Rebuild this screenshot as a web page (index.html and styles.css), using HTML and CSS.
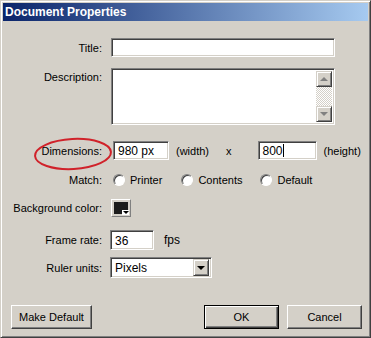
FILE: index.html
```html
<!DOCTYPE html>
<html lang="en">

<head>
  <meta charset="utf-8" />
  <title>Document Properties</title>
  <link rel="stylesheet" href="styles.css">
</head>

<body>
  <div class="window">
    <div class="titlebar">Document Properties</div>
    <div class="content">
      <div class="row row-title">
        <label class="label">Title:</label>
        <div class="field field-wide"></div>
      </div>

      <div class="row row-desc">
        <label class="label label-top">Description:</label>
        <div class="field field-wide field-area">
          <div class="scrollbar">
            <div class="scroll-btn"><span class="arrow arrow-up"></span></div>
            <div class="scroll-track"></div>
            <div class="scroll-btn"><span class="arrow arrow-down"></span></div>
          </div>
        </div>
      </div>

      <div class="row row-dims">
        <label class="label">Dimensions:</label>
        <div class="field field-dim">980 px</div>
        <span class="unit unit-width">(width)</span>
        <span class="times">x</span>
        <div class="field field-dim field-height">800<span class="caret"></span></div>
        <span class="unit">(height)</span>
        <svg class="circled" width="82" height="36" viewBox="0 0 82 36">
          <ellipse cx="41" cy="18" rx="38" ry="15" fill="none" stroke="#d0222a" stroke-width="2"
            transform="rotate(-3 41 18)" />
        </svg>
      </div>

      <div class="row row-match">
        <label class="label">Match:</label>
        <div class="radios">
          <span class="radio-item"><span class="radio"></span>Printer</span>
          <span class="radio-item"><span class="radio"></span>Contents</span>
          <span class="radio-item"><span class="radio"></span>Default</span>
        </div>
      </div>

      <div class="row row-color">
        <label class="label">Background color:</label>
        <div class="swatch">
          <div class="swatch-fill"></div>
          <span class="swatch-arrow"></span>
        </div>
      </div>

      <div class="row row-rate">
        <label class="label">Frame rate:</label>
        <div class="field field-rate">36</div>
        <span class="unit unit-fps">fps</span>
      </div>

      <div class="row row-ruler">
        <label class="label">Ruler units:</label>
        <div class="field select">
          <span class="select-value">Pixels</span>
          <span class="select-btn"><span class="arrow arrow-black"></span></span>
        </div>
      </div>

      <div class="buttons">
        <button class="btn btn-wide">Make Default</button>
        <div class="buttons-right">
          <button class="btn btn-default">OK</button>
          <button class="btn">Cancel</button>
        </div>
      </div>
    </div>
  </div>
</body>

</html>
```

FILE: styles.css
```css
:root {
  --face: #d4d0c8;
  --shadow: #808080;
  --dark: #404040;
  --light: #ffffff;
}

html,
body {
  margin: 0;
  height: 100%;
}

body {
  background: var(--face);
  font-family: "Liberation Sans", Arial, sans-serif;
  font-size: 11px;
  color: #000;
}

.window {
  box-sizing: border-box;
  width: 371px;
  height: 338px;
  padding: 2px;
  border: 1px solid;
  border-color: var(--face) var(--dark) var(--dark) var(--face);
  box-shadow: inset 1px 1px var(--light), inset -1px -1px var(--shadow);
  display: flex;
  flex-direction: column;
}

.titlebar {
  height: 18px;
  line-height: 18px;
  padding-left: 2px;
  font-weight: bold;
  font-size: 12px;
  color: #fff;
  background: linear-gradient(to right, #0a246a, #a6caf0);
}

.content {
  position: relative;
  display: flex;
  flex-direction: column;
  padding-top: 17px;
}

.row {
  display: flex;
  align-items: center;
}

.label {
  box-sizing: border-box;
  width: 99px;
  flex: none;
  text-align: right;
  margin-right: 8px;
}

.label-top {
  align-self: flex-start;
  padding-top: 3px;
}

.field {
  box-sizing: border-box;
  height: 19px;
  background: #fff;
  border: 1px solid;
  border-color: var(--shadow) var(--light) var(--light) var(--shadow);
  box-shadow: inset 1px 1px var(--dark), inset -1px -1px var(--face);
  padding: 2px 4px 0;
  line-height: 14px;
  font-size: 12px;
}

.field-wide {
  width: 224px;
  margin-left: 1px;
}

.row-desc {
  margin-top: 11px;
}

.field-area {
  height: 57px;
  display: flex;
  justify-content: flex-end;
  padding: 2px;
}

.scrollbar {
  width: 16px;
  display: flex;
  flex-direction: column;
}

.scroll-track {
  flex: 1;
  background-color: #fff;
  background-image: repeating-conic-gradient(var(--face) 0 25%, #fff 0 50%);
  background-size: 2px 2px;
}

.scroll-btn {
  box-sizing: border-box;
  height: 16px;
  background: var(--face);
  border: 1px solid;
  border-color: var(--face) var(--dark) var(--dark) var(--face);
  box-shadow: inset 1px 1px var(--light), inset -1px -1px var(--shadow);
  display: flex;
  align-items: center;
  justify-content: center;
}

.arrow {
  width: 0;
  height: 0;
  border-left: 4px solid transparent;
  border-right: 4px solid transparent;
}

.arrow-up {
  border-bottom: 4px solid var(--shadow);
}

.arrow-down {
  border-top: 4px solid var(--shadow);
}

.arrow-black {
  border-top: 4px solid #000;
}

.row-dims {
  margin-top: 16px;
}

.field-dim {
  width: 56px;
  margin-left: 3px;
}

.field-height {
  width: 59px;
  margin-left: 0;
}

.caret {
  display: inline-block;
  width: 1px;
  height: 13px;
  background: #000;
  vertical-align: -2px;
}

.unit {
  margin-left: 7px;
}

.unit-width {
  margin-right: 17px;
}

.times {
  margin-right: 26px;
}

.circled {
  position: absolute;
  left: 29px;
  top: 115px;
}

.row-match {
  margin-top: 13px;
  height: 14px;
}

.radios {
  display: flex;
  margin-left: 3px;
}

.radio-item {
  display: flex;
  align-items: center;
  margin-right: 19px;
}

.radio-item:nth-child(2) {
  margin-right: 18px;
}

.radio {
  box-sizing: border-box;
  width: 12px;
  height: 12px;
  border-radius: 50%;
  background: #fff;
  border: 1px solid;
  border-color: var(--shadow) var(--light) var(--light) var(--shadow);
  box-shadow: inset 1px 1px var(--dark);
  margin-right: 5px;
}

.row-color {
  margin-top: 12px;
}

.swatch {
  position: relative;
  box-sizing: border-box;
  width: 20px;
  height: 18px;
  margin-left: 1px;
  padding: 2px;
  background: var(--face);
  border: 1px solid;
  border-color: var(--light) var(--shadow) var(--shadow) var(--light);
}

.swatch-fill {
  width: 100%;
  height: 100%;
  background: #1c1c1c;
}

.swatch-arrow {
  position: absolute;
  right: 1px;
  bottom: 1px;
  width: 7px;
  height: 5px;
  background: #fff;
}

.swatch-arrow::after {
  content: "";
  position: absolute;
  left: 1px;
  top: 1px;
  border-left: 3px solid transparent;
  border-right: 3px solid transparent;
  border-top: 3px solid #000;
}

.row-rate {
  margin-top: 13px;
}

.field-rate {
  width: 44px;
  height: 20px;
  padding-top: 3px;
}

.unit-fps {
  margin-left: 10px;
  font-size: 12px;
}

.row-ruler {
  margin-top: 7px;
}

.select {
  width: 102px;
  height: 21px;
  display: flex;
  align-items: center;
  justify-content: space-between;
  padding: 2px;
}

.select-value {
  padding-left: 2px;
}

.select-btn {
  box-sizing: border-box;
  width: 16px;
  height: 17px;
  background: var(--face);
  border: 1px solid;
  border-color: var(--face) var(--dark) var(--dark) var(--face);
  box-shadow: inset 1px 1px var(--light), inset -1px -1px var(--shadow);
  display: flex;
  align-items: center;
  justify-content: center;
}

.buttons {
  display: flex;
  justify-content: space-between;
  margin-top: 27px;
  padding: 0 6px 0 8px;
}

.buttons-right {
  display: flex;
  gap: 8px;
}

.btn {
  box-sizing: border-box;
  width: 75px;
  height: 24px;
  font-family: "Liberation Sans", Arial, sans-serif;
  font-size: 11px;
  color: #000;
  background: var(--face);
  border: 1px solid;
  border-color: var(--light) var(--dark) var(--dark) var(--light);
  box-shadow: inset -1px -1px var(--shadow), inset 1px 1px var(--face);
  padding: 0;
}

.btn-wide {
  width: 81px;
}

.btn-default {
  border-color: #000;
  box-shadow: inset 1px 1px var(--light), inset -1px -1px var(--dark), inset -2px -2px var(--shadow);
}
```
